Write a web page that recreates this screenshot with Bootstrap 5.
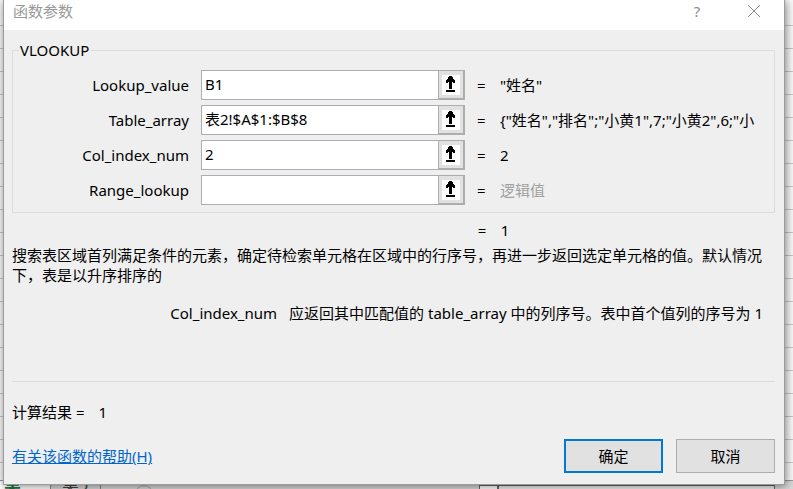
<!DOCTYPE html>
<html lang="zh-CN">
<head>
<meta charset="utf-8">
<meta name="viewport" content="width=device-width, initial-scale=1">
<title>函数参数</title>
<link href="https://cdn.jsdelivr.net/npm/bootstrap@5.3.0/dist/css/bootstrap.min.css" rel="stylesheet">
<style>
  body { font: 15px/20px "Noto Sans", "Noto Sans CJK SC", sans-serif; color: #000; background: #fafafa; }
  .sheet-area { background: repeating-linear-gradient(#fafafa 0 22px, #c8c8c8 22px 23px) 0 3px; }
  .fn-dialog { margin: 0 8px -5px 3px; background: #efefef; border: 1px solid #9b9b9b; border-top: 0; box-shadow: 1px 1px 9px rgba(0,0,0,.5); z-index: 2; }
  .title-strip { height: 30px; padding: 0 20px 8px 9px; column-gap: 37px; background: #fff; color: #999; }
  .title-strip button { width: 20px; height: 20px; border: 0; padding: 0; background: none; color: #8c8c8c; }
  .dialog-content { padding: 10px 9px 11px 8px; }
  .fn-group { border: 1px solid #dcdcdc; height: 173px; padding: 0 11px 8px 0; }
  .fn-group legend { font-size: 15px; line-height: 20px; width: auto; float: none; margin: 0 0 10px 6px; padding: 0 2px 0 1px; }
  .arg-row { display: grid; grid-template-columns: 176fr 264fr 11px 263fr; column-gap: 12px; align-items: center; }
  .arg-row + .arg-row { margin-top: 5px; }
  .arg-box { height: 30px; background: #fff; border: 1px solid #abadb3; }
  .arg-box input { border: 0; padding: 0 0 3px 3px; background: none; outline: 0; min-width: 0; color: #000; }
  .arg-box button { width: 27px; margin: -1px; padding: 0; background: #e1e1e1; border: 1px solid #adadad; border-right-width: 2px; border-bottom-width: 2px; }
  .muted-value { color: #a0a0a0; }
  .fn-summary { padding: 7px 11px 0 1px; }
  .fn-desc { min-height: 50px; padding: 5px 3px 0 0; margin: 0; }
  .arg-help { margin-top: 13px; min-height: 79px; padding-right: 12px; column-gap: 12px; border-bottom: 1px solid #dcdcdc; }
  .result-line { margin-top: 20px; column-gap: 14px; }
  .help-link { color: #0066cc; }
  .dialog-footer { margin-top: 17px; column-gap: 13px; }
  .dlg-btn { width: 99px; height: 34px; border: 1px solid #adadad; background: #e1e1e1; color: #000; padding: 0; }
  .dlg-btn.is-default { border: 2px solid #0078d7; }
  .tab-strip { height: 9px; background: #d8d8d8; border-top: 1px solid #999; font-size: 17px; line-height: 16px; }
  .sheet-tab { border-right: 1px solid #888; height: 24px; width: 50px; padding-left: 11px; color: #444; }
  .sheet-tab.current { background: #fff; color: #217346; width: 51px; padding-left: 4px; font-weight: 700; }
  .add-sheet { width: 18px; height: 18px; margin: 4px 0 0 34px; border: 1px solid #a8a8a8; }
  .scroll-track { margin: 4px 18px 0 auto; width: 296px; height: 20px; background: #eee; border: 1px solid #666; }
  .scroll-track i { display: block; width: 19px; height: 20px; border-right: 2px solid #666; background: #fff; }
</style>
<script src="https://cdn.jsdelivr.net/npm/bootstrap@5.3.0/dist/js/bootstrap.bundle.min.js"></script>
</head>
<body class="vh-100 overflow-hidden">
<svg class="d-none" xmlns="http://www.w3.org/2000/svg">
  <symbol id="pick" viewBox="0 0 18 20" shape-rendering="crispEdges">
    <path fill="#fff" d="M0 0h18v20H0z"/>
    <path d="M7 1h3v1h1v2h1v1h1v3h-2V7h-1v7H7V7H6v1H4V5h1V4h1V2h1zM4 15h9v2H4z"/>
  </symbol>
</svg>
<div class="d-flex flex-column vh-100">
  <div class="sheet-area flex-grow-1">
    <main class="fn-dialog position-relative">
      <header class="title-strip d-flex align-items-center">
        <span class="me-auto">函数参数</span>
        <button type="button" aria-label="帮助">?</button>
        <button type="button" class="d-flex align-items-center justify-content-center" aria-label="关闭"><svg width="14" height="14" viewBox="0 0 14 14" fill="none" stroke="#8c8c8c"><path d="M1 1l12 12M13 1L1 13"/></svg></button>
      </header>
      <form class="dialog-content" onsubmit="return false">
        <fieldset class="fn-group">
          <legend>VLOOKUP</legend>
          <div class="arg-row">
            <label class="text-end" for="lookup">Lookup_value</label>
            <div class="arg-box d-flex"><input id="lookup" class="flex-grow-1" value="B1"><button type="button" aria-label="选择 Lookup_value"><svg width="18" height="20"><use href="#pick"/></svg></button></div>
            <span>=</span><output class="text-nowrap overflow-hidden">"姓名"</output>
          </div>
          <div class="arg-row">
            <label class="text-end" for="table">Table_array</label>
            <div class="arg-box d-flex"><input id="table" class="flex-grow-1" value="表2!$A$1:$B$8"><button type="button" aria-label="选择 Table_array"><svg width="18" height="20"><use href="#pick"/></svg></button></div>
            <span>=</span><output class="text-nowrap overflow-hidden">{"姓名","排名";"小黄1",7;"小黄2",6;"小</output>
          </div>
          <div class="arg-row">
            <label class="text-end" for="colnum">Col_index_num</label>
            <div class="arg-box d-flex"><input id="colnum" class="flex-grow-1" value="2"><button type="button" aria-label="选择 Col_index_num"><svg width="18" height="20"><use href="#pick"/></svg></button></div>
            <span>=</span><output>2</output>
          </div>
          <div class="arg-row">
            <label class="text-end" for="range">Range_lookup</label>
            <div class="arg-box d-flex"><input id="range" class="flex-grow-1"><button type="button" aria-label="选择 Range_lookup"><svg width="18" height="20"><use href="#pick"/></svg></button></div>
            <span>=</span><output class="muted-value">逻辑值</output>
          </div>
        </fieldset>
        <div class="arg-row fn-summary"><span></span><span></span><span>=</span><output>1</output></div>
        <p class="fn-desc">搜索表区域首列满足条件的元素，确定待检索单元格在区域中的行序号，再进一步返回选定单元格的值。默认情况下，表是以升序排序的</p>
        <div class="arg-help d-flex justify-content-end"><span>Col_index_num</span><span>应返回其中匹配值的 table_array 中的列序号。表中首个值列的序号为 1</span></div>
        <div class="result-line d-flex"><span>计算结果 =</span><output>1</output></div>
        <footer class="dialog-footer d-flex align-items-center">
          <a class="help-link me-auto" href="#help">有关该函数的帮助(H)</a>
          <button type="submit" class="dlg-btn is-default">确定</button>
          <button type="button" class="dlg-btn">取消</button>
        </footer>
      </form>
    </main>
  </div>
  <div class="tab-strip d-flex overflow-hidden flex-shrink-0">
    <span class="sheet-tab current">表</span>
    <span class="sheet-tab">表2</span>
    <span class="add-sheet rounded-circle"></span>
    <span class="scroll-track flex-shrink-0"><i></i></span>
  </div>
</div>
</body>
</html>
